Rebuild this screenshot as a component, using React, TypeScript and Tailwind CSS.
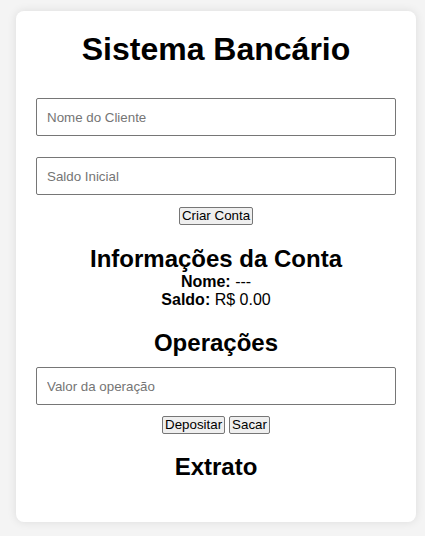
export default function App() {
  const inputCls =
    "block w-full h-[38px] mt-[10px] px-[10px] border border-[#767676] rounded-[2px] bg-white text-[13.33px] text-black placeholder:text-[#757575] outline-none";
  const btnCls =
    "inline-block bg-[#efefef] border border-[#767676] rounded-[2px] px-[2px] py-0 text-[13.33px] leading-[16px] text-black";

  return (
    <div
      className="min-h-[536px] bg-[#f4f4f4] pt-[11px] pl-[16px]"
      style={{ fontFamily: '"Liberation Sans", Arial, sans-serif' }}
    >
      <div className="w-[400px] bg-white rounded-lg shadow-[0_0_10px_rgba(0,0,0,0.1)] p-[20px] pb-[41px] text-center text-black">
        <h1 className="text-[32px] font-bold leading-[37px] mb-[30px]">Sistema Bancário</h1>

        <input className={inputCls} placeholder="Nome do Cliente" />
        <input className={`${inputCls} mt-[21px]`} placeholder="Saldo Inicial" />
        <div className="mt-[10px] leading-[19px]">
          <button className={btnCls}>Criar Conta</button>
        </div>

        <h2 className="text-[24px] font-bold leading-[28px] mt-[20px]">Informações da Conta</h2>
        <p className="text-[16px] leading-[18px]">
          <strong>Nome:</strong> <span>---</span>
        </p>
        <p className="text-[16px] leading-[18px]">
          <strong>Saldo:</strong> R$ <span>0.00</span>
        </p>

        <h2 className="text-[24px] font-bold leading-[28px] mt-[20px]">Operações</h2>
        <input className={inputCls} placeholder="Valor da operação" />
        <div className="mt-[11px] leading-[19px] flex justify-center gap-[4px]">
          <button className={btnCls}>Depositar</button>
          <button className={btnCls}>Sacar</button>
        </div>

        <h2 className="text-[24px] font-bold leading-[28px] mt-[19px]">Extrato</h2>
      </div>
    </div>
  );
}
